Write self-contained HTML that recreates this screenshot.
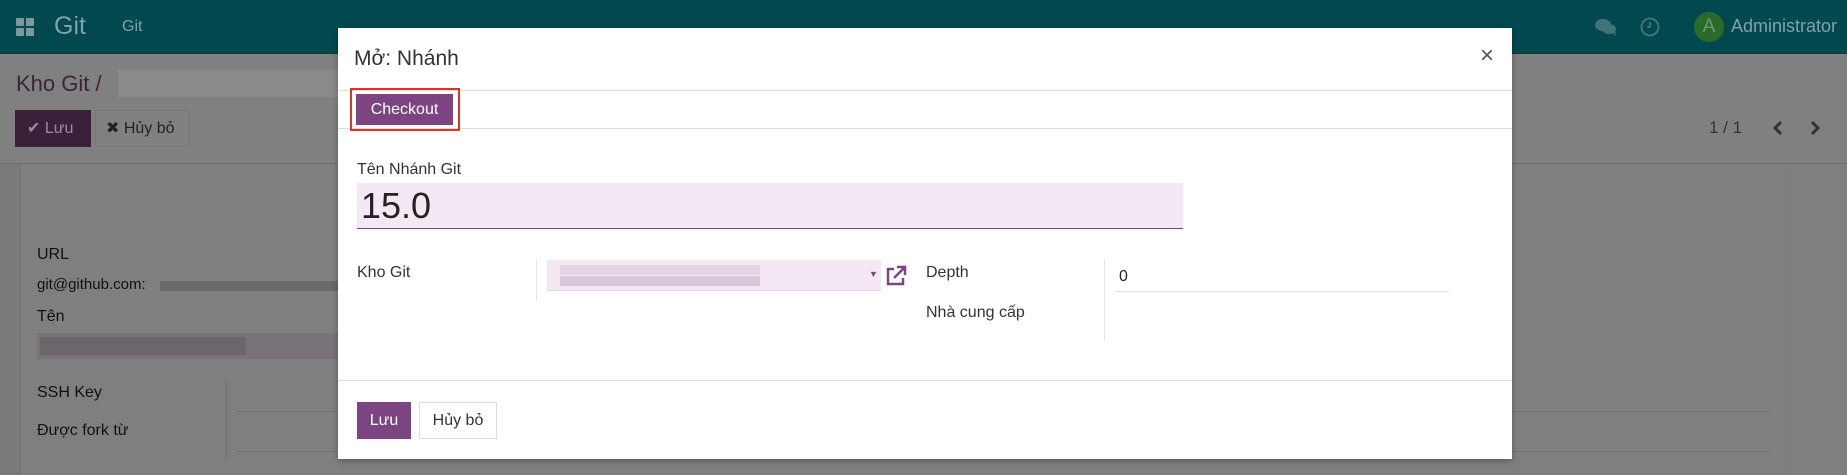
<!DOCTYPE html>
<html><head><meta charset="utf-8"><style>
*{box-sizing:border-box;margin:0;padding:0}
body{width:1847px;height:475px;overflow:hidden;position:relative;background:#808080;font-family:"Liberation Sans","Noto Sans CJK SC",sans-serif;color:#222}
.a{position:absolute}
</style></head><body>
<!-- navbar -->
<div class="a" style="left:0;top:0;width:1847px;height:54px;background:#01484f;border-bottom:1px solid #013a40"></div>
<div class="a" style="left:16px;top:18px;width:8px;height:8px;background:#7a9a9d;border-radius:1px"></div>
<div class="a" style="left:26px;top:18px;width:8px;height:8px;background:#7a9a9d;border-radius:1px"></div>
<div class="a" style="left:16px;top:28px;width:8px;height:8px;background:#7a9a9d;border-radius:1px"></div>
<div class="a" style="left:26px;top:28px;width:8px;height:8px;background:#7a9a9d;border-radius:1px"></div>
<div class="a" style="left:54px;top:12px;font-size:25px;color:#7fa3a7">Git</div>
<div class="a" style="left:122px;top:18px;font-size:16px;color:#7fa3a7">Git</div>
<svg class="a" style="left:1594px;top:17px" width="24" height="20" viewBox="0 0 24 20"><ellipse cx="9" cy="8" rx="8" ry="6" fill="#3f7479"/><ellipse cx="15" cy="12" rx="7" ry="5" fill="#3f7479"/><path d="M18 15l4 4-1-5z" fill="#3f7479"/></svg>
<svg class="a" style="left:1639px;top:16px" width="22" height="22" viewBox="0 0 22 22"><circle cx="11" cy="11" r="8.5" fill="none" stroke="#3f7479" stroke-width="2"/><path d="M11 6v5h-3" fill="none" stroke="#3f7479" stroke-width="1.8"/></svg>
<div class="a" style="left:1694px;top:12px;width:30px;height:30px;border-radius:50%;background:#2c6a2a;color:#6a9b6a;font-size:19px;text-align:center;line-height:30px">A</div>
<div class="a" style="left:1731px;top:16px;font-size:18px;color:#7fa3a7">Administrator</div>
<!-- control panel -->
<div class="a" style="left:16px;top:71px;font-size:22px;color:#3b2638">Kho Git /</div>
<div class="a" style="left:118px;top:70px;width:220px;height:27px;background:#8a8a8a"></div>
<div class="a" style="left:15px;top:110px;width:76px;height:37px;background:#3a2139;color:#9e8a9d;font-size:16px;line-height:37px;padding-left:12px">✔ Lưu</div>
<div class="a" style="left:95px;top:110px;width:95px;height:37px;border:1px solid #777;color:#222;font-size:16px;line-height:35px;padding-left:10px">✖ Hủy bỏ</div>
<div class="a" style="left:1709px;top:118px;font-size:17px;color:#333">1 / 1</div>
<svg class="a" style="left:1771px;top:119px" width="14" height="18" viewBox="0 0 14 18"><path d="M10 3L4 9l6 6" fill="none" stroke="#333" stroke-width="3"/></svg>
<svg class="a" style="left:1808px;top:119px" width="14" height="18" viewBox="0 0 14 18"><path d="M4 3l6 6-6 6" fill="none" stroke="#333" stroke-width="3"/></svg>
<div class="a" style="left:0;top:163px;width:1847px;height:1px;background:#6e6e6e"></div>
<div class="a" style="left:0;top:164px;width:20px;height:311px;background:#7a7a7a"></div>
<div class="a" style="left:20px;top:164px;width:1770px;height:311px;background:#7f7f7f;border-left:1px solid #737373;border-right:1px solid #7a7a7a"></div>
<div class="a" style="left:37px;top:246px;font-size:16px;color:#111">URL</div>
<div class="a" style="left:37px;top:276px;font-size:15px;color:#111">git@github.com:</div>
<div class="a" style="left:160px;top:281px;width:180px;height:10px;background:#6a6a6a"></div>
<div class="a" style="left:37px;top:308px;font-size:16px;color:#111">Tên</div>
<div class="a" style="left:37px;top:333px;width:303px;height:26px;background:#797379"></div>
<div class="a" style="left:40px;top:337px;width:206px;height:18px;background:#6c666c"></div>
<div class="a" style="left:37px;top:384px;font-size:16px;color:#111">SSH Key</div>
<div class="a" style="left:37px;top:422px;font-size:16px;color:#111">Được fork từ</div>
<div class="a" style="left:226px;top:380px;width:1px;height:80px;background:#6f6f6f"></div>
<div class="a" style="left:235px;top:411px;width:1535px;height:1px;background:#737373"></div>
<div class="a" style="left:235px;top:451px;width:1535px;height:1px;background:#737373"></div>
<!-- modal -->
<div class="a" style="left:338px;top:28px;width:1174px;height:431px;background:#fff;box-shadow:0 2px 6px rgba(0,0,0,.3)"></div>
<div class="a" style="left:354px;top:47px;font-size:21px;color:#333">Mở: Nhánh</div>
<div class="a" style="left:1480px;top:42px;font-size:24px;color:#555">×</div>
<div class="a" style="left:338px;top:90px;width:1174px;height:1px;background:#ddd"></div>
<div class="a" style="left:338px;top:128px;width:1174px;height:1px;background:#ddd"></div>
<div class="a" style="left:350px;top:88px;width:110px;height:43px;border:2px solid #e0302a"></div>
<div class="a" style="left:356px;top:94px;width:97px;height:31px;background:#7c4480;color:#fff;font-size:16px;text-align:center;line-height:31px">Checkout</div>
<div class="a" style="left:357px;top:161px;font-size:16px;color:#333">Tên Nhánh Git</div>
<div class="a" style="left:357px;top:183px;width:826px;height:46px;background:#f3e8f4;border-bottom:1px solid #7c4480"></div>
<div class="a" style="left:361px;top:183px;font-size:36px;color:#222;line-height:46px">15.0</div>
<div class="a" style="left:357px;top:264px;font-size:16px;color:#333">Kho Git</div>
<div class="a" style="left:536px;top:260px;width:1px;height:40px;background:#e4e4e4"></div>
<div class="a" style="left:547px;top:260px;width:334px;height:31px;background:#f3e8f4;border-bottom:1px solid #ddd"></div>
<div class="a" style="left:560px;top:265px;width:200px;height:10px;background:#e2d6e3"></div>
<div class="a" style="left:560px;top:276px;width:200px;height:10px;background:#d6c8d8"></div>
<div class="a" style="left:869px;top:269px;font-size:9px;color:#7c4480">▼</div>
<svg class="a" style="left:884px;top:264px" width="24" height="24" viewBox="0 0 24 24"><path d="M10 5H4v15h15v-6" fill="none" stroke="#7c4480" stroke-width="2.5"/><path d="M10 14L20 4M13 3h8v8" fill="none" stroke="#7c4480" stroke-width="2.5"/></svg>
<div class="a" style="left:926px;top:264px;font-size:16px;color:#333">Depth</div>
<div class="a" style="left:926px;top:304px;font-size:16px;color:#333">Nhà cung cấp</div>
<div class="a" style="left:1104px;top:260px;width:1px;height:80px;background:#e4e4e4"></div>
<div class="a" style="left:1119px;top:268px;font-size:16px;color:#222">0</div>
<div class="a" style="left:1115px;top:291px;width:334px;height:1px;background:#e4e4e4"></div>
<div class="a" style="left:338px;top:380px;width:1174px;height:1px;background:#ddd"></div>
<div class="a" style="left:357px;top:402px;width:54px;height:37px;background:#7c4480;color:#fff;font-size:16px;text-align:center;line-height:37px">Lưu</div>
<div class="a" style="left:419px;top:402px;width:78px;height:37px;border:1px solid #ddd;color:#333;font-size:16px;text-align:center;line-height:35px">Hủy bỏ</div>
</body></html>
